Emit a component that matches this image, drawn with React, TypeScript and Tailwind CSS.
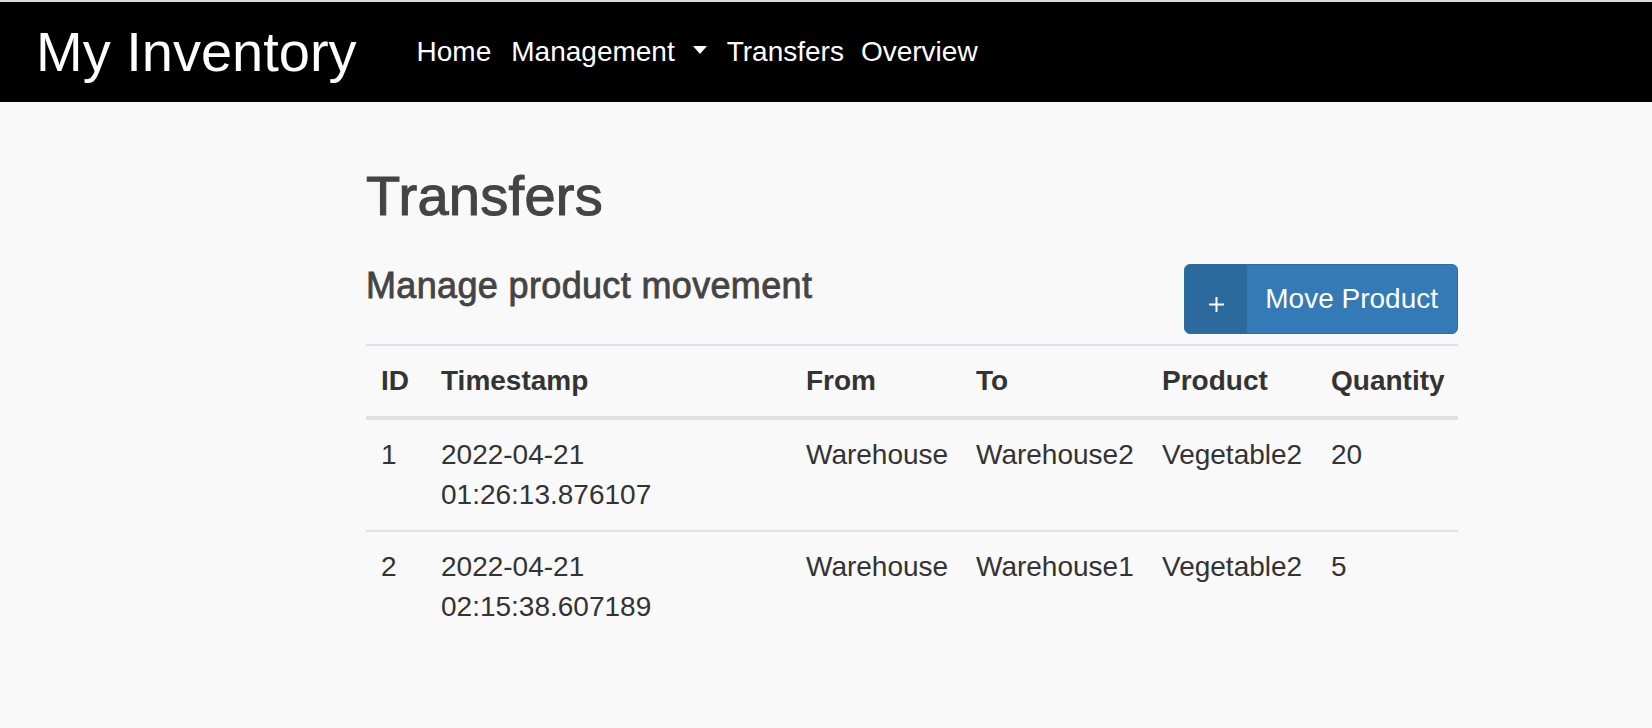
import { ReactNode } from 'react'

interface Transfer {
  id: number
  date: string
  time: string
  from: string
  to: string
  product: string
  quantity: number
}

const transfers: Transfer[] = [
  { id: 1, date: '2022-04-21', time: '01:26:13.876107', from: 'Warehouse', to: 'Warehouse2', product: 'Vegetable2', quantity: 20 },
  { id: 2, date: '2022-04-21', time: '02:15:38.607189', from: 'Warehouse', to: 'Warehouse1', product: 'Vegetable2', quantity: 5 },
]

function NavLink({ children, className = '' }: { children: ReactNode; className?: string }) {
  return <a className={`text-white text-[28px] leading-[40px] ${className}`}>{children}</a>
}

function Caret() {
  return (
    <span className="ml-[18px] inline-block w-0 h-0 border-l-[7px] border-r-[7px] border-t-[8px] border-l-transparent border-r-transparent border-t-white mt-[-4px]" />
  )
}

export default function App() {
  return (
    <div className="min-h-[728px] bg-[#f9f9f9] text-[#333] font-['Liberation_Sans',Arial,sans-serif]">
      <div className="h-[2px] bg-[#dcdcdc]" />
      <nav className="h-[100px] bg-black flex items-center pl-[36px]">
        <span className="text-white text-[56px] leading-[64px]">My Inventory</span>
        <div className="flex items-center ml-[60px]">
          <NavLink>Home</NavLink>
          <NavLink className="ml-[20px]">Management</NavLink>
          <Caret />
          <NavLink className="ml-[20px]">Transfers</NavLink>
          <NavLink className="ml-[17px]">Overview</NavLink>
        </div>
      </nav>

      <main className="ml-[366px] w-[1092px] pt-[62px]">
        <h1 className="text-[56px] leading-[64px] text-[#444] [-webkit-text-stroke:1.1px_#444] tracking-[0.3px]">Transfers</h1>

        <div className="mt-[36px] flex items-start justify-between">
          <h3 className="text-[36px] leading-[44px] text-[#444] [-webkit-text-stroke:0.8px_#444] tracking-[0.35px]">
            Manage product movement
          </h3>
          <button className="flex items-stretch h-[70px] rounded-[6px] border border-[#2e6da4] bg-[#337ab7] text-white">
            <span className="w-[62px] rounded-l-[5px] bg-[#2c699c] flex items-center justify-center pt-[10px]">
              <svg width="15" height="15" viewBox="0 0 15 15">
                <path d="M7.5 0v15M0 7.5h15" stroke="white" strokeWidth="2" />
              </svg>
            </span>
            <span className="flex items-center pl-[18px] pr-[19px] text-[28px] leading-[40px]">Move Product</span>
          </button>
        </div>

        <div className="mt-[10px] h-[2px] bg-[#dee2e6]" />

        <table className="w-full table-fixed border-collapse text-[28px] leading-[40px]">
          <colgroup>
            <col className="w-[60px]" />
            <col className="w-[365px]" />
            <col className="w-[170px]" />
            <col className="w-[186px]" />
            <col className="w-[169px]" />
            <col className="w-[142px]" />
          </colgroup>
          <thead>
            <tr className="border-b-4 border-[#dee2e6]">
              {['ID', 'Timestamp', 'From', 'To', 'Product', 'Quantity'].map((h) => (
                <th key={h} className="px-[15px] py-[15px] text-left font-bold whitespace-nowrap">
                  {h}
                </th>
              ))}
            </tr>
          </thead>
          <tbody>
            {transfers.map((t, i) => (
              <tr key={t.id} className={i < transfers.length - 1 ? 'border-b-2 border-[#dee2e6]' : ''}>
                <td className="px-[15px] py-[15px] align-top">{t.id}</td>
                <td className="px-[15px] py-[15px] align-top">
                  {t.date}
                  <br />
                  {t.time}
                </td>
                <td className="px-[15px] py-[15px] align-top">{t.from}</td>
                <td className="px-[15px] py-[15px] align-top">{t.to}</td>
                <td className="px-[15px] py-[15px] align-top">{t.product}</td>
                <td className="px-[15px] py-[15px] align-top">{t.quantity}</td>
              </tr>
            ))}
          </tbody>
        </table>
      </main>
    </div>
  )
}
